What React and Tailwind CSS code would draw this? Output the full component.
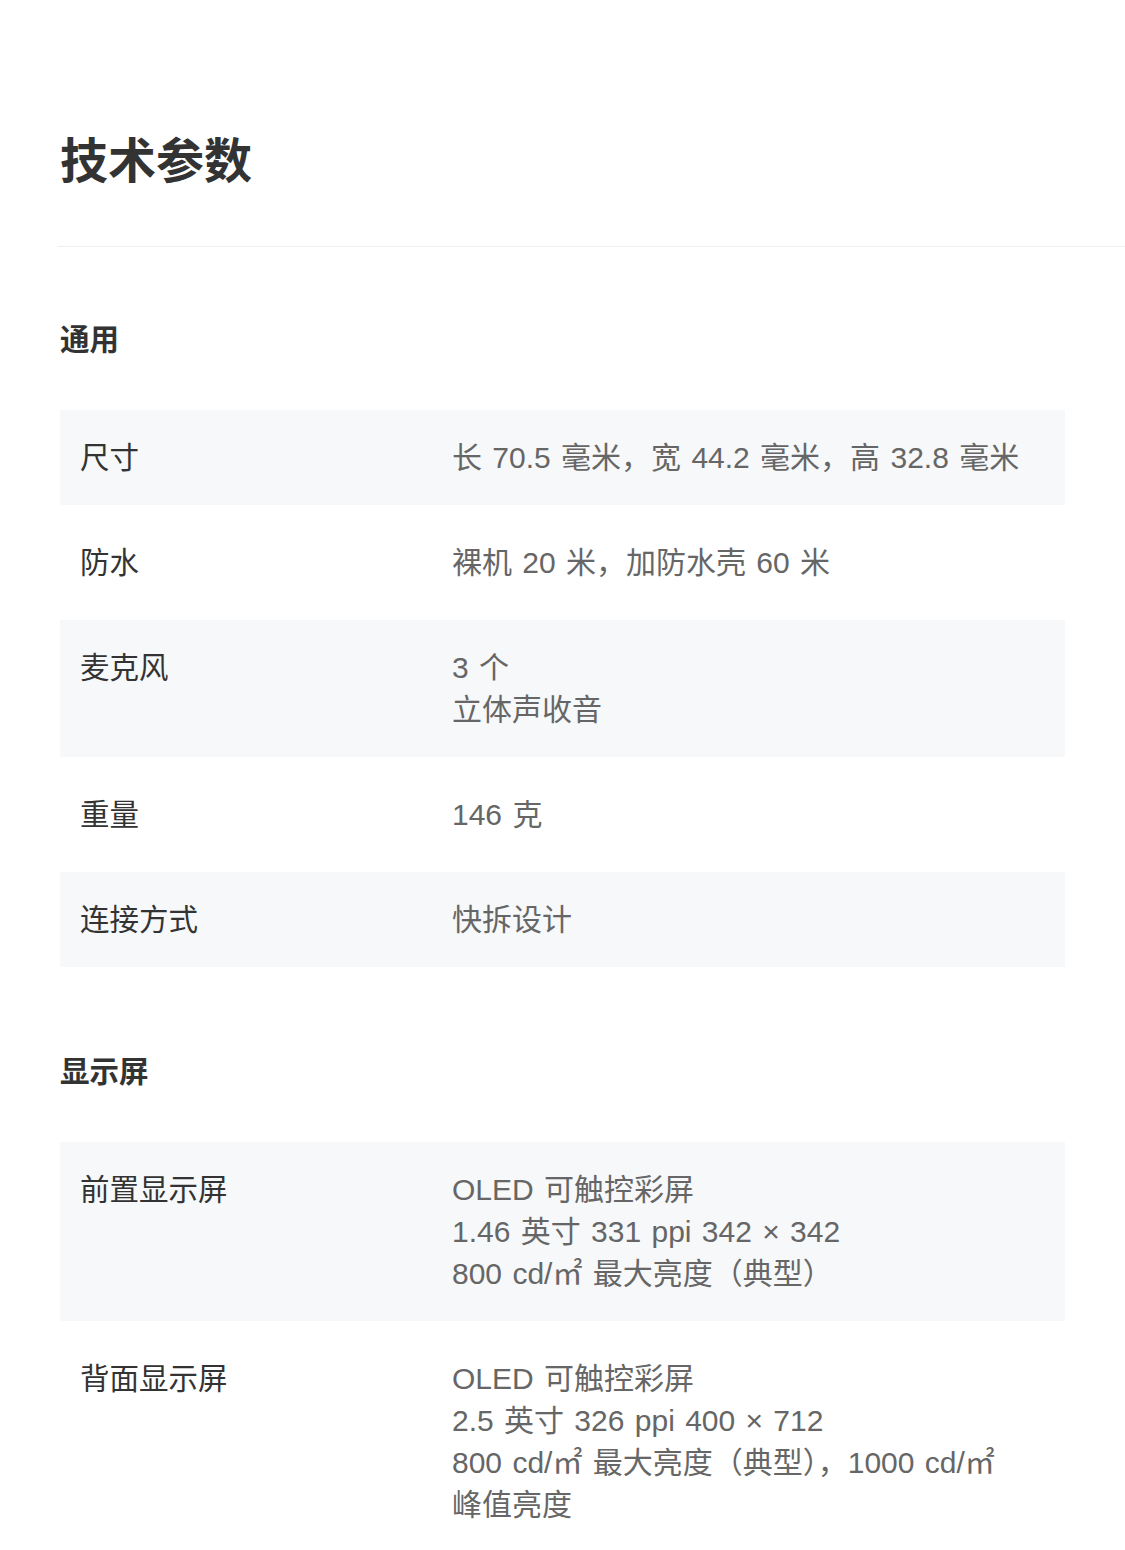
import React from 'react';

const sections = [
  {
    title: '通用',
    rows: [
      { label: '尺寸', value: ['长 70.5 毫米，宽 44.2 毫米，高 32.8 毫米'] },
      { label: '防水', value: ['裸机 20 米，加防水壳 60 米'] },
      { label: '麦克风', value: ['3 个', '立体声收音'] },
      { label: '重量', value: ['146 克'] },
      { label: '连接方式', value: ['快拆设计'] },
    ],
  },
  {
    title: '显示屏',
    rows: [
      {
        label: '前置显示屏',
        value: ['OLED 可触控彩屏', '1.46 英寸 331 ppi 342 × 342', '800 cd/㎡ 最大亮度（典型）'],
      },
      {
        label: '背面显示屏',
        value: [
          'OLED 可触控彩屏',
          '2.5 英寸 326 ppi 400 × 712',
          '800 cd/㎡ 最大亮度（典型），1000 cd/㎡',
          '峰值亮度',
        ],
      },
    ],
  },
];

const SpecRow = ({ row, striped }) => (
  <div className={`flex py-[26.5px] pl-5 pr-5 ${striped ? 'bg-[#f7f8fa]' : ''}`}>
    <div className="w-[372px] shrink-0 text-[#333333]">{row.label}</div>
    <div className="flex-1 text-[#666666] text-[30px] [word-spacing:2px]">
      {row.value.map((line, i) => (
        <div key={i} className="whitespace-nowrap">{line}</div>
      ))}
    </div>
  </div>
);

const App = () => {
  return (
    <div
      className="min-h-[1550px] w-full bg-white pt-[126px] text-[29.5px] leading-[42px]"
      style={{ fontFamily: '"Liberation Sans", "Noto Sans CJK SC", sans-serif' }}
    >
      <div className="pl-[60px]">
        <h1 className="text-[48px] font-bold leading-[72px] text-[#333333]">技术参数</h1>
      </div>

      {/* divider runs to the right edge */}
      <div className="ml-[58px] mt-[48px] h-px bg-[#efefef]" />

      <div className="mt-[72px] pl-[60px] pr-[60px]">
        {sections.map((section, si) => (
          <div key={section.title} className={si > 0 ? 'mt-[84px]' : ''}>
            <h2 className="font-bold text-[#333333]">{section.title}</h2>
            <div className="mt-[49px] flex flex-col gap-[10px]">
              {section.rows.map((row, ri) => (
                <SpecRow key={row.label} row={row} striped={ri % 2 === 0} />
              ))}
            </div>
          </div>
        ))}
      </div>
    </div>
  );
};

export default App;
